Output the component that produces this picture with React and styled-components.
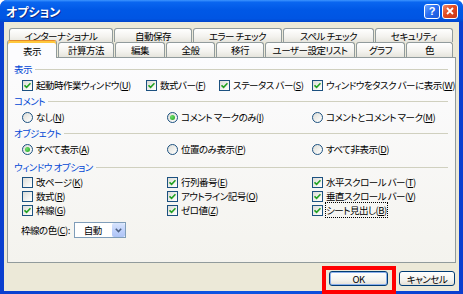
import styled, { createGlobalStyle } from "styled-components"

const GlobalStyle = createGlobalStyle`
  html, body { margin: 0; padding: 0; background: #fff; }
  body {
    font-family: "Noto Sans CJK JP", "Noto Sans", sans-serif;
    font-size: 9.5px;
    font-feature-settings: "palt";
    letter-spacing: -0.5px;
    color: #000;
  }
`

const Window = styled.div`
  width: 463px;
  height: 294px;
  display: flex;
  flex-direction: column;
  border-radius: 7px 7px 0 0;
  overflow: hidden;
  background: linear-gradient(90deg, #0a3fcf, #0d55e3 50%, #0a3fcf);
`

const TitleBar = styled.div`
  flex: none;
  height: 22px;
  display: flex;
  align-items: center;
  padding: 0 5px 0 6px;
  background: linear-gradient(180deg, #3d95ff 0%, #0a66f0 10%, #0058e6 45%, #0055e3 85%, #0045cc 100%);
`

const Title = styled.div`
  flex: 1;
  color: #fff;
  font-weight: bold;
  font-size: 12px;
  letter-spacing: 0;
  text-shadow: 1px 1px #0b2b8a;
`

const CaptionButton = styled.div`
  width: 16px;
  height: 15px;
  box-sizing: border-box;
  margin-left: 2px;
  border: 1px solid #fff;
  border-radius: 3px;
  display: flex;
  align-items: center;
  justify-content: center;
  color: #fff;
  font-family: "Liberation Sans", sans-serif;
  font-weight: bold;
  font-size: 11px;
  letter-spacing: 0;
  background: ${p => p.$close
    ? "linear-gradient(135deg, #f08a6c, #e2491f 45%, #c8381a)"
    : "linear-gradient(135deg, #6fa6ff, #2a6ef2 45%, #1c56d6)"};
`

const Body = styled.div`
  flex: 1;
  margin: 0 4px 3px;
  padding: 6px 3px 0;
  background: #ece9d8;
  display: flex;
  flex-direction: column;
`

const TabRow = styled.div`
  display: flex;
  gap: 1px;
  height: ${p => p.$h}px;
  padding-left: ${p => p.$indent}px;
  align-items: flex-end;
`

const Tab = styled.div`
  width: ${p => p.$w}px;
  height: ${p => (p.$active ? 18 : p.$h)}px;
  box-sizing: border-box;
  flex: none;
  display: flex;
  align-items: center;
  justify-content: center;
  border: 1px solid #919b9c;
  border-bottom: none;
  border-radius: 3px 3px 0 0;
  background: ${p => (p.$active ? "#fcfcfe" : "linear-gradient(180deg, #fff, #f3f2ee 60%, #e6e4dc)")};
  ${p => p.$active && `
    position: relative;
    z-index: 1;
    margin-bottom: -1px;
    border-top: 1px solid #e68b2c;
    box-shadow: inset 0 2px 0 #ffc83c;
    padding-top: 2px;
  `}
`

const Panel = styled.div`
  width: 449px;
  height: 206px;
  box-sizing: border-box;
  border: 1px solid #919b9c;
  padding: 3px 6px 0;
  background: linear-gradient(180deg, #fcfcfe, #f4f3ee);
`

const Header = styled.div`
  height: 16px;
  margin-top: ${p => p.$mt || 0}px;
  display: flex;
  align-items: center;
  gap: 3px;
  color: #0046d5;
  padding-right: 1px;
  &::after {
    content: "";
    flex: 1;
    height: 1px;
    background: #d0d0bf;
  }
`

const OptionRow = styled.div`
  display: grid;
  grid-template-columns: ${p => p.$cols};
  height: ${p => p.$h}px;
  padding-left: 8px;
`

const Option = styled.label`
  display: flex;
  align-items: center;
  gap: 3px;
  white-space: nowrap;
`

const Text = styled.span`
  ${p => p.$focus && "outline: 1px dotted #000; outline-offset: 0;"}
`

const Key = styled.u`
  text-underline-offset: 1px;
`

const Box = styled.span`
  width: 11px;
  height: 11px;
  box-sizing: border-box;
  flex: none;
  display: flex;
  align-items: center;
  justify-content: center;
  border: 1px solid #1c5180;
  border-radius: ${p => (p.$round ? "50%" : "0")};
  background: linear-gradient(135deg, #dcdcd7, #f6f6f3 70%, #fff);
`

const Dot = styled.span`
  width: 5px;
  height: 5px;
  border-radius: 50%;
  background: radial-gradient(circle at 35% 35%, #6ee06a, #21a121);
`

const ColorRow = styled.div`
  margin-top: 5px;
  display: flex;
  align-items: center;
  gap: 4px;
  padding-left: 7px;
`

const Select = styled.div`
  width: 52px;
  height: 16px;
  box-sizing: border-box;
  border: 1px solid #7f9db9;
  background: #fff;
  display: flex;
`

const SelectValue = styled.span`
  flex: 1;
  display: flex;
  align-items: center;
  padding-left: 9px;
`

const SelectArrow = styled.span`
  width: 13px;
  display: flex;
  align-items: center;
  justify-content: center;
  border-radius: 2px;
  background: linear-gradient(180deg, #d9e5fd, #bccffa 60%, #aec4f6);
`

const ButtonRow = styled.div`
  margin-top: 8px;
  padding-right: 1px;
  display: flex;
  justify-content: flex-end;
  gap: 11px;
`

const Marked = styled.div`
  position: relative;
  display: flex;
`

const RedFrame = styled.div`
  position: absolute;
  top: -5px;
  left: -7px;
  right: -8px;
  bottom: -8px;
  border: 4px solid #f00;
`

const Button = styled.div`
  width: ${p => p.$w}px;
  height: 15px;
  box-sizing: border-box;
  display: flex;
  align-items: center;
  justify-content: center;
  border: 1px solid #003c74;
  border-radius: 3px;
  background: linear-gradient(180deg, #fff, #f4f4f0 60%, #e3e0d6);
  ${p => p.$default && "box-shadow: inset 0 0 0 1px #8cb0ec;"}
`

const upperTabs = [
  ["インターナショナル", 104],
  ["自動保存", 78],
  ["エラー チェック", 89],
  ["スペル チェック", 91],
  ["セキュリティ", 78],
]

const lowerTabs = [
  ["表示", 50, true],
  ["計算方法", 56],
  ["編集", 50],
  ["全般", 49],
  ["移行", 48],
  ["ユーザー設定リスト", 90],
  ["グラフ", 49],
  ["色", 47],
]

const Check = () => (
  <svg width="7" height="7" viewBox="0 0 7 7">
    <path d="M0.5 3.3 L2.6 5.4 L6.5 1.2" stroke="#21a121" strokeWidth="1.6" fill="none" />
  </svg>
)

const Item = ({ label, k, radio, on, focus }) => (
  <Option>
    <Box $round={radio}>{on && (radio ? <Dot /> : <Check />)}</Box>
    <Text $focus={focus}>{label}(<Key>{k}</Key>)</Text>
  </Option>
)

const THREE = "145px 145px 1fr"

const App = () => (
  <>
    <GlobalStyle />
    <Window>
      <TitleBar>
        <Title>オプション</Title>
        <CaptionButton>?</CaptionButton>
        <CaptionButton $close>
          <svg width="8" height="8" viewBox="0 0 8 8">
            <path d="M1 1 L7 7 M7 1 L1 7" stroke="#fff" strokeWidth="1.8" />
          </svg>
        </CaptionButton>
      </TitleBar>
      <Body>
        <TabRow $h={14} $indent={2}>
          {upperTabs.map(([t, w]) => <Tab key={t} $w={w} $h={14}>{t}</Tab>)}
        </TabRow>
        <TabRow $h={15} $indent={0}>
          {lowerTabs.map(([t, w, a]) => <Tab key={t} $w={w} $h={15} $active={a}>{t}</Tab>)}
        </TabRow>
        <Panel>
          <Header>表示</Header>
          <OptionRow $cols="124px 73px 93px 1fr" $h={16}>
            <Item label="起動時作業ウィンドウ" k="U" on />
            <Item label="数式バー" k="F" on />
            <Item label="ステータス バー" k="S" on />
            <Item label="ウィンドウをタスク バーに表示" k="W" on />
          </OptionRow>
          <Header>コメント</Header>
          <OptionRow $cols={THREE} $h={16}>
            <Item label="なし" k="N" radio />
            <Item label="コメント マークのみ" k="I" radio on />
            <Item label="コメントとコメント マーク" k="M" radio />
          </OptionRow>
          <Header>オブジェクト</Header>
          <OptionRow $cols={THREE} $h={16}>
            <Item label="すべて表示" k="A" radio on />
            <Item label="位置のみ表示" k="P" radio />
            <Item label="すべて非表示" k="D" radio />
          </OptionRow>
          <Header $mt={2}>ウィンドウ オプション</Header>
          <OptionRow $cols={THREE} $h={14}>
            <Item label="改ページ" k="K" />
            <Item label="行列番号" k="E" on />
            <Item label="水平スクロール バー" k="T" on />
          </OptionRow>
          <OptionRow $cols={THREE} $h={14}>
            <Item label="数式" k="R" />
            <Item label="アウトライン記号" k="O" on />
            <Item label="垂直スクロール バー" k="V" on />
          </OptionRow>
          <OptionRow $cols={THREE} $h={14}>
            <Item label="枠線" k="G" on />
            <Item label="ゼロ値" k="Z" on />
            <Item label="シート見出し" k="B" on focus />
          </OptionRow>
          <ColorRow>
            <span>枠線の色(<Key>C</Key>):</span>
            <Select>
              <SelectValue>自動</SelectValue>
              <SelectArrow>
                <svg width="7" height="5" viewBox="0 0 7 5">
                  <path d="M0.8 0.8 L3.5 3.6 L6.2 0.8" stroke="#4d6185" strokeWidth="1.5" fill="none" />
                </svg>
              </SelectArrow>
            </Select>
          </ColorRow>
        </Panel>
        <ButtonRow>
          <Marked>
            <Button $w={59} $default>OK</Button>
            <RedFrame />
          </Marked>
          <Button $w={56}>キャンセル</Button>
        </ButtonRow>
      </Body>
    </Window>
  </>
)

export default App
